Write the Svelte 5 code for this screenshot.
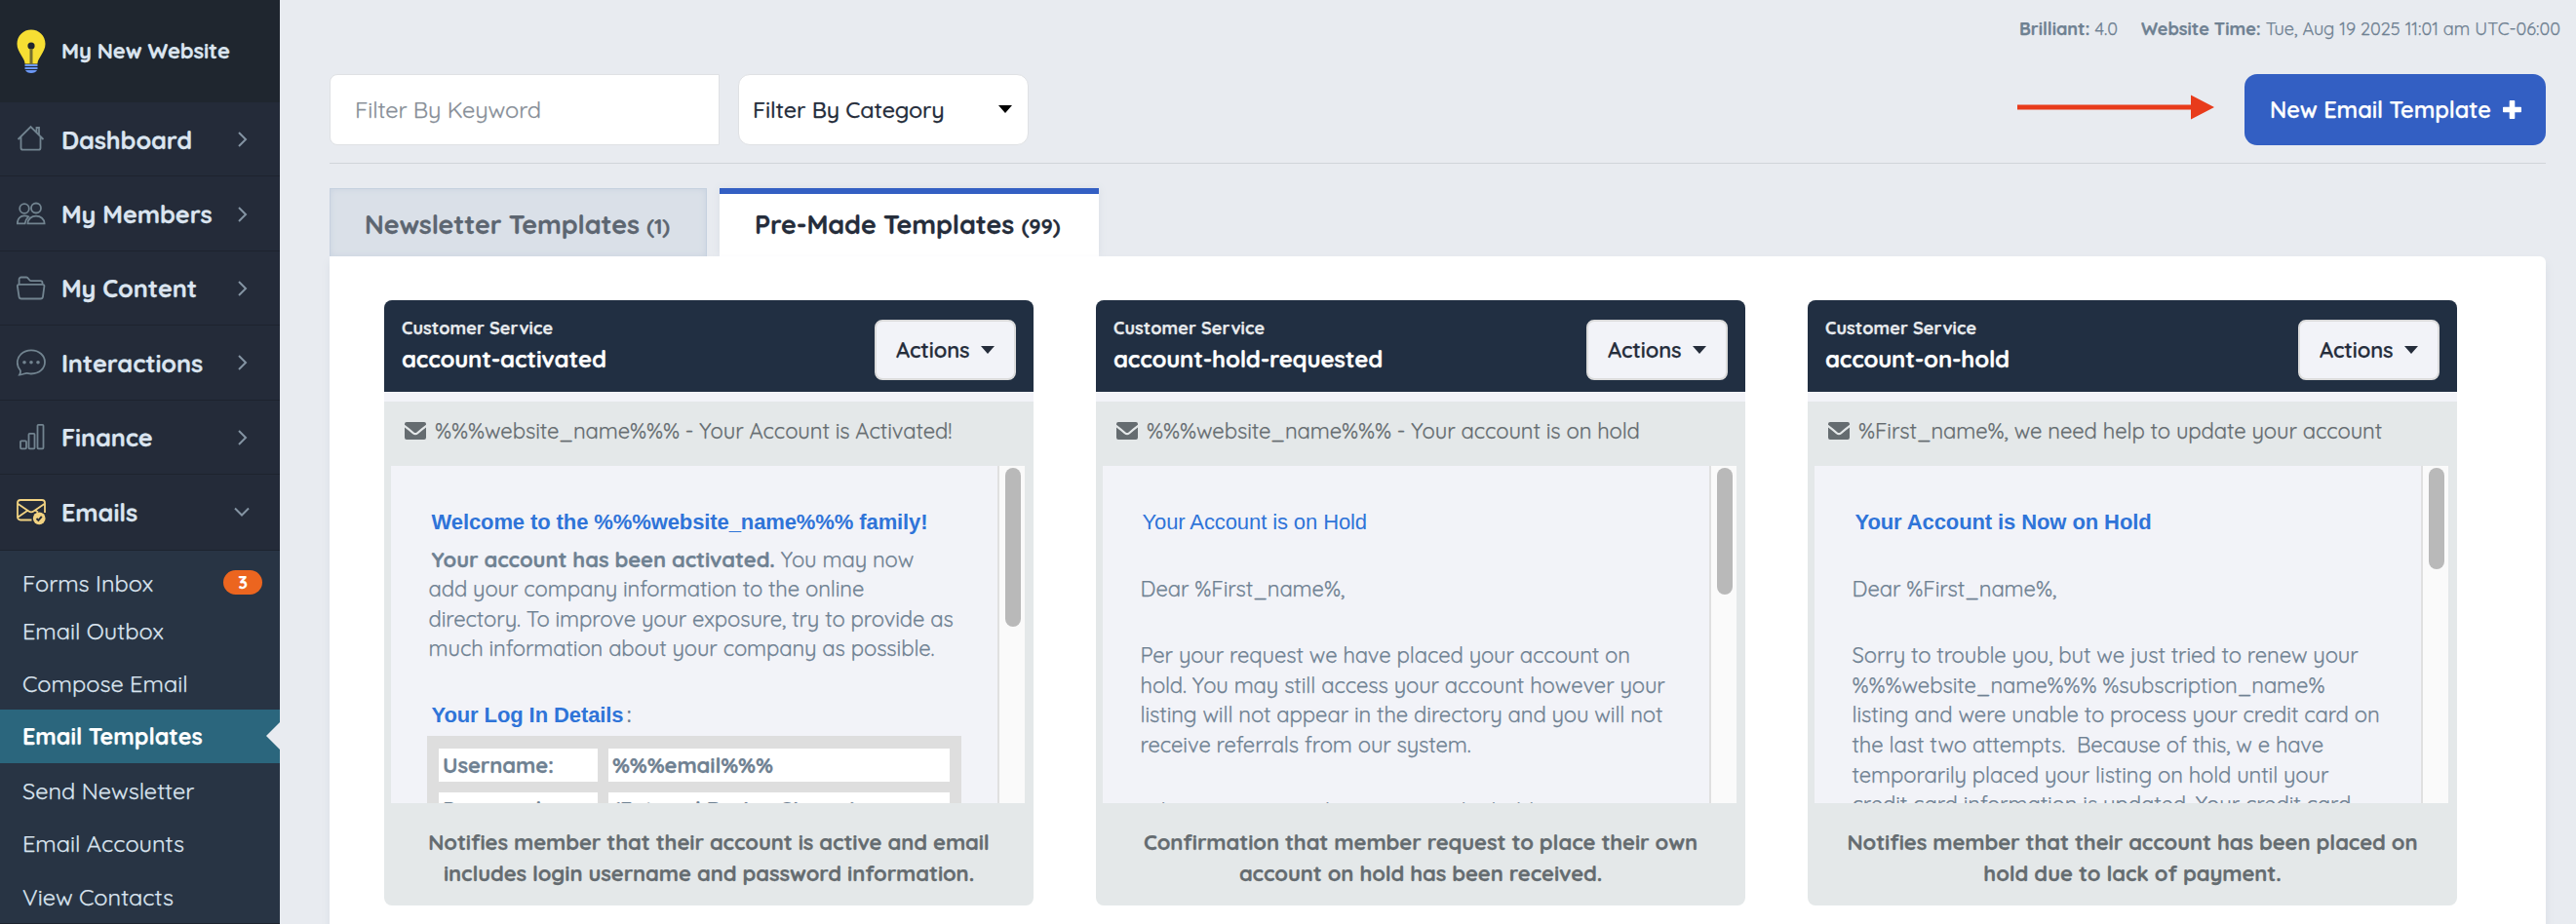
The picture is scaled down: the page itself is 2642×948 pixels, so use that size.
<script lang="ts">
  type Line = { text: string; bold?: string };

  const menu = [
    { label: "Dashboard", icon: "home" },
    { label: "My Members", icon: "people" },
    { label: "My Content", icon: "folder" },
    { label: "Interactions", icon: "chat" },
    { label: "Finance", icon: "bars" },
    { label: "Emails", icon: "envelope", open: true },
  ];

  const submenu = [
    { label: "Forms Inbox", badge: 3 },
    { label: "Email Outbox" },
    { label: "Compose Email" },
    { label: "Email Templates", active: true },
    { label: "Send Newsletter" },
    { label: "Email Accounts" },
    { label: "View Contacts" },
  ];

  const templates: {
    category: string;
    name: string;
    subject: string;
    heading: string;
    light?: boolean;
    paragraphs: Line[][];
    login?: string[][];
    thumb: number;
    notes: string[];
  }[] = [
    {
      category: "Customer Service",
      name: "account-activated",
      subject: "%%%website_name%%% - Your Account is Activated!",
      heading: "Welcome to the %%%website_name%%% family!",
      paragraphs: [
        [
          { bold: "Your account has been activated.", text: " You may now" },
          { text: "add your company information to the online" },
          { text: "directory. To improve your exposure, try to provide as" },
          { text: "much information about your company as possible." },
        ],
      ],
      login: [
        ["Username:", "%%%email%%%"],
        ["Password:", "(Entered During Signup)"],
      ],
      thumb: 163,
      notes: [
        "Notifies member that their account is active and email",
        "includes login username and password information.",
      ],
    },
    {
      category: "Customer Service",
      name: "account-hold-requested",
      subject: "%%%website_name%%% - Your account is on hold",
      heading: "Your Account is on Hold",
      light: true,
      paragraphs: [
        [{ text: "Dear %First_name%," }],
        [
          { text: "Per your request we have placed your account on" },
          { text: "hold. You may still access your account however your" },
          { text: "listing will not appear in the directory and you will not" },
          { text: "receive referrals from our system." },
        ],
        [{ text: "When you are ready to remove the hold" }],
      ],
      thumb: 130,
      notes: [
        "Confirmation that member request to place their own",
        "account on hold has been received.",
      ],
    },
    {
      category: "Customer Service",
      name: "account-on-hold",
      subject: "%First_name%, we need help to update your account",
      heading: "Your Account is Now on Hold",
      paragraphs: [
        [{ text: "Dear %First_name%," }],
        [
          { text: "Sorry to trouble you, but we just tried to renew your" },
          { text: "%%%website_name%%% %subscription_name%" },
          { text: "listing and were unable to process your credit card on" },
          { text: "the last two attempts.  Because of this, w e have" },
          { text: "temporarily placed your listing on hold until your" },
          { text: "credit card information is updated. Your credit card" },
        ],
      ],
      thumb: 104,
      notes: [
        "Notifies member that their account has been placed on",
        "hold due to lack of payment.",
      ],
    },
  ];
</script>

<div class="app">
  <aside class="sidebar">
    <div class="brand">
      <svg class="bulb" viewBox="0 0 30 45" width="30" height="45">
        <path
          fill="#f7df33"
          d="M15 .5C6.800.5.500 6.800.500 15c0 4.500 2 7.800 4.200 11.500C6.800 30 8.300 32 8.600 35.500h12.800c.3-3.500 1.800-5.500 3.900-9C27.500 22.800 29.500 19.500 29.500 15 29.500 6.800 23.200.5 15 .5z"
        />
        <circle cx="15" cy="17" r="3.600" fill="#1f262f" />
        <path stroke="#1f262f" stroke-width="2.600" d="M15 17v18.500" />
        <path stroke="#f7df33" stroke-width=".8" d="M15 20v15.500" />
        <path fill="#6b97f5" d="M8.500 36h13v2h-13zM8.500 39h13v2h-13zM9 42h12c-1 2-3.200 3-6 3s-5-1-6-3z" />
      </svg>
      <span>My New Website</span>
    </div>

    <nav>
      {#each menu as item}
        <a class="item" class:open={item.open} href="#{item.icon}">
          <svg class="icon {item.icon}" viewBox="0 0 30 30" width="30" height="30">
            {#if item.icon === "home"}
              <path d="M1.500 15 14.500 2l13 13M4.500 12.500v11.200a2 2 0 0 0 2 2h16a2 2 0 0 0 2-2V12.500M20.500 7.500v-4.500H23v7" />
            {:else if item.icon === "people"}
              <circle cx="8" cy="9" r="4.800" />
              <circle cx="20" cy="8.500" r="5" />
              <path d="M12.200 17.300C10.800 16.500 9.500 16.300 8 16.300 3.800 16.300.8 19.500.8 24.300h7.800c.3-2.800 1.400-5 3.600-7z" />
              <path d="M20 16.700c-4.800 0-8.400 3-8.600 7.600h17.200c-.2-4.600-3.800-7.600-8.600-7.600z" />
            {:else if item.icon === "folder"}
              <path d="M2.600 10V5.500a2 2 0 0 1 2-2h5.600c1.800 0 2.600 3.700 4.600 3.700h9.700a2 2 0 0 1 2 2V10" />
              <path d="M2.500 10.800h24.200c1.200 0 1.800.8 1.700 1.800l-1.400 10.700a2.500 2.500 0 0 1-2.500 2.200H5a2.500 2.500 0 0 1-2.500-2.200L.9 12.600c-.1-1 .5-1.800 1.600-1.800z" />
            {:else if item.icon === "chat"}
              <path d="M3 27.500c1-1.500 1.200-2.800.8-4.500C1.800 20.800.8 18.200.8 15 .8 8.200 6.600 2.400 15 2.400S29 8 29 14.500 23.400 26.500 15 26.500c-2.200 0-3.200-.6-4.500-.6-2.200 0-3.700 1.400-7.500 1.600z" />
              <g class="dots"><circle cx="8" cy="14.800" r="1.800" /><circle cx="15" cy="14.800" r="1.800" /><circle cx="22" cy="14.800" r="1.800" /></g>
            {:else if item.icon === "bars"}
              <rect x="4" y="18.300" width="6" height="8" rx="1" />
              <rect x="12.500" y="10.800" width="6" height="15.500" rx="1" />
              <rect x="21.500" y="1.800" width="6" height="24.500" rx="1" />
            {:else}
              <path d="M15.500 23.500H4a3 3 0 0 1-3-3V6a3 3 0 0 1 3-3h22a3 3 0 0 1 3 3v10M1.500 7 12.500 14.500c2 1.400 3 1.400 5 0L28.500 7M1.500 20.500 11 14M22 15.500l-3-2" />
              <circle class="tick" cx="23.200" cy="21.800" r="6.400" />
              <path class="mark" d="m20.500 22 1.900 1.900 3.400-4" />
            {/if}
          </svg>
          <span>{item.label}</span>
          <svg class="chevron" viewBox="0 0 16 16" width="16" height="16">
            <path d={item.open ? "M1 4.500 8 11.500l7-7" : "M5 1l7 7-7 7"} />
          </svg>
        </a>
      {/each}
    </nav>

    <div class="submenu">
      {#each submenu as entry}
        <a class:active={entry.active} class:tight={entry.badge} href="#emails">
          <span>{entry.label}</span>
          {#if entry.badge}<b class="badge">{entry.badge}</b>{/if}
        </a>
      {/each}
    </div>
  </aside>

  <main>
    <div class="status">
      <span class="version"><b>Brilliant:</b> 4.0</span>
      <span><b>Website Time:</b> Tue, Aug 19 2025 11:01 am UTC-06:00</span>
    </div>

    <div class="toolbar">
      <input class="keyword" placeholder="Filter By Keyword" />
      <div class="select">
        <span>Filter By Category</span>
        <i class="caret"></i>
      </div>
      <svg class="arrow" viewBox="0 0 202 26" width="202" height="26">
        <path fill="#e83b1b" d="M0 10.500h178V.5l24 12.500-24 12.500v-10H0z" />
      </svg>
      <button class="create">
        <span>New Email Template</span>
        <svg viewBox="0 0 19 19" width="19" height="19">
          <path fill="#fff" d="M7.500 0h4q.8 0 .8.800v5.900h5.900q.8 0 .8.800v4q0 .8-.8.800h-5.900v5.900q0 .8-.8.800h-4q-.8 0-.8-.8v-5.900H.8q-.8 0-.8-.8v-4q0-.8.800-.8h5.900V.8q0-.8.800-.8z" />
        </svg>
      </button>
    </div>

    <div class="tabs">
      <div class="tab">Newsletter Templates <small>(1)</small></div>
      <div class="tab current">Pre-Made Templates <small>(99)</small></div>
    </div>

    <section class="panel">
      {#each templates as template}
        <article class="card">
          <header>
            <div>
              <p class="category">{template.category}</p>
              <h3>{template.name}</h3>
            </div>
            <button class="actions">Actions <i class="caret"></i></button>
          </header>

          <div class="subject">
            <svg viewBox="0 0 22 18" width="22" height="18">
              <path d="M2 0h18a2 2 0 0 1 2 2v.8c-3.300 2.500-6.500 5-9.500 7.600-1 .9-2 .9-3 0C6.500 7.800 3.300 5.300 0 2.800V2a2 2 0 0 1 2-2z" />
              <path d="M0 5.500c2.800 2.200 5.500 4.300 8 6.500 2 1.800 4 1.800 6 0 2.500-2.200 5.200-4.300 8-6.500V16a2 2 0 0 1-2 2H2a2 2 0 0 1-2-2z" />
            </svg>
            <span>{template.subject}</span>
          </div>

          <div class="preview">
            <div class="mail" class:welcome={template.login}>
              <h4 class:light={template.light}>{template.heading}</h4>
              {#each template.paragraphs as lines}
                <p>
                  {#each lines as line}
                    <span class="line">{#if line.bold}<b>{line.bold}</b>{/if}{line.text}</span>
                  {/each}
                </p>
              {/each}
              {#if template.login}
                <h4 class="details">Your Log In Details<i>:</i></h4>
                <div class="login">
                  {#each template.login as row}
                    {#each row as cell}<b>{cell}</b>{/each}
                  {/each}
                </div>
              {/if}
            </div>
            <div class="track"><div class="thumb" style="height: {template.thumb}px"></div></div>
          </div>

          <footer>
            {#each template.notes as note}<span>{note}</span>{/each}
          </footer>
        </article>
      {/each}
    </section>
  </main>
</div>

<style>
  :global(body) {
    overflow: hidden;
    background: #e8ebf0;
  }

  .app {
    display: flex;
    height: 948px;
    overflow: hidden;
    font-family: Quicksand, Lato, sans-serif;
    font-size: 22px;
    letter-spacing: -0.1px;
    -webkit-text-stroke: 0.25px currentColor;
    color: #252d3b;
  }

  .app * {
    box-sizing: border-box;
  }

  p,
  h3,
  h4 {
    margin: 0;
  }

  a {
    color: inherit;
    text-decoration: none;
  }

  button,
  input {
    font: inherit;
    letter-spacing: inherit;
  }

  .caret {
    border: 7px solid transparent;
    border-top: 8px solid currentColor;
    border-bottom: 0;
  }

  .sidebar {
    width: 287px;
    flex: none;
    background: #242b39;
    color: #dbe5f0;
  }

  .brand {
    display: flex;
    align-items: center;
    gap: 16px;
    height: 105px;
    padding: 0 0 1px 17px;
    background: #1f262f;
    font-weight: 700;
  }

  .item {
    display: flex;
    align-items: center;
    height: 76.400px;
    padding: 1px 31px 0 17px;
    border-bottom: 1px solid #1d232e;
    font-size: 25.300px;
    font-weight: 700;
  }

  .item.open {
    height: 78px;
    padding-top: 0;
  }

  .item span {
    flex: 1;
    margin-left: 16px;
  }

  .icon {
    fill: none;
    stroke: #728490;
    stroke-width: 1.800;
  }

  .dots {
    fill: #728490;
    stroke: none;
  }

  .icon.envelope {
    stroke: #f2d382;
  }

  .icon .tick {
    fill: #f2d382;
    stroke: none;
  }

  .icon .mark {
    stroke: #242b39;
    stroke-width: 2;
  }

  .chevron {
    fill: none;
    stroke: #8494a3;
    stroke-width: 2;
  }

  .submenu {
    background: #283444;
    border-bottom: 1px solid #1d232e;
    padding-top: 8px;
  }

  .submenu a {
    display: flex;
    position: relative;
    align-items: center;
    justify-content: space-between;
    height: 54.600px;
    padding: 1px 18px 0 23px;
    font-size: 23.500px;
    letter-spacing: 0;
  }

  .submenu .tight {
    height: 46px;
    padding-top: 5px;
  }

  .submenu .active {
    background: #2b667d;
    color: #fff;
    font-size: 23.300px;
    font-weight: 700;
  }

  .submenu .active::after {
    content: "";
    position: absolute;
    top: 13px;
    right: 0;
    border: 14px solid transparent;
    border-right-color: #e8ebf0;
    border-left: 0;
  }

  .badge {
    width: 40px;
    margin-top: -2px;
    border-radius: 13px;
    background: #ec651f;
    color: #fff;
    font-size: 18px;
    line-height: 25px;
    text-align: center;
  }

  main {
    flex: 1;
    padding: 0 31px 0 51px;
  }

  .status {
    display: flex;
    justify-content: flex-end;
    gap: 24px;
    height: 76px;
    margin-right: -15px;
    padding-top: 18px;
    color: #6f8192;
    font-size: 18.100px;
    letter-spacing: 0;
  }

  .toolbar {
    display: flex;
    align-items: center;
    height: 92px;
    padding-bottom: 18px;
    border-bottom: 1px solid #d0d5da;
    font-size: 23.600px;
  }

  .keyword {
    width: 400px;
    height: 73px;
    padding: 0 25px 1px;
    border: 1px solid #dfe1e4;
    border-radius: 8px 0 0 8px;
    background: #fff;
  }

  .keyword::placeholder {
    color: #878e97;
  }

  .select {
    display: flex;
    align-items: center;
    justify-content: space-between;
    width: 298px;
    height: 73px;
    margin-left: 19px;
    padding: 0 16px 1px 14px;
    border: 1px solid #dfe1e4;
    border-radius: 12px;
    background: #fff;
    font-size: 23.300px;
    font-weight: 500;
  }

  .select .caret {
    color: #000;
  }

  .arrow {
    margin: -5px 31px 0 auto;
  }

  .create {
    display: flex;
    align-items: center;
    justify-content: space-between;
    width: 309px;
    height: 73px;
    padding: 0 25px 1px 26px;
    border: 0;
    border-radius: 13px;
    background: #335fc3;
    color: #fff;
    font-weight: 600;
    white-space: nowrap;
  }

  .tabs {
    display: flex;
    gap: 13px;
    padding-top: 25px;
  }

  .tab {
    width: 387px;
    height: 70px;
    padding: 0 35px;
    border: 1px solid #c6d1df;
    border-bottom: 0;
    background: #dae0e8;
    box-shadow: inset 0 0 6px #c8d2df;
    color: #5d6671;
    font-size: 26.900px;
    font-weight: 700;
    line-height: 73px;
    white-space: nowrap;
  }

  .tab.current {
    width: 389px;
    padding-left: 36px;
    border: 0;
    border-top: 6px solid #335fc3;
    background: #fff;
    box-shadow: 0 0 8px #d9dee5;
    color: #252d3b;
    line-height: 62px;
  }

  .tab small {
    font-size: 21.700px;
  }

  .panel {
    position: relative;
    display: flex;
    gap: 64px;
    height: 700px;
    padding: 45px 56px;
    border-radius: 0 6px 0 0;
    background: #fff;
    box-shadow: 0 6px 8px #d9dee5;
  }

  .card {
    width: 666px;
    height: 621px;
    flex: none;
    overflow: hidden;
    border-radius: 8px;
    background: #e4e8e9;
  }

  header {
    display: flex;
    align-items: center;
    justify-content: space-between;
    height: 104px;
    padding: 0 18px 0 18px;
    border-bottom: 10px solid #f2f3f8;
    background: #212f42;
    color: #fff;
  }

  .category {
    color: #e8ebee;
    font-size: 18px;
    font-weight: 700;
    letter-spacing: 0.1px;
    line-height: 28px;
  }

  h3 {
    margin-bottom: 2px;
    font-size: 24px;
    letter-spacing: -0.2px;
    line-height: 34px;
  }

  .actions {
    display: flex;
    align-items: center;
    justify-content: space-between;
    width: 145px;
    height: 62px;
    margin-top: 7px;
    padding: 0 20px;
    border: 2px solid #dcdcdc;
    border-radius: 8px;
    background: #f2f3f8;
    color: #252d3b;
    font-weight: 600;
  }

  .subject {
    display: flex;
    align-items: center;
    gap: 9px;
    height: 66px;
    padding: 0 0 7px 21px;
    color: #656c70;
    white-space: nowrap;
  }

  .subject svg {
    fill: #656c70;
  }

  .preview {
    display: flex;
    width: 650px;
    height: 346px;
    margin-left: 7px;
    overflow: hidden;
    background: #f2f3f8;
  }

  .mail {
    flex: 1;
    min-width: 0;
    padding: 43px 0 0 38.500px;
    color: #6f8192;
    line-height: 30.600px;
  }

  .mail p {
    display: flex;
    flex-direction: column;
    margin-top: 37.500px;
  }

  .mail.welcome p {
    margin-top: 7px;
  }

  .line {
    white-space: pre;
  }

  .welcome .line:first-child {
    margin-left: 3px;
  }

  h4 {
    margin-left: 3px;
    color: #2f74d8;
    font: 700 22px/30.6px "Liberation Sans", Arial, sans-serif;
    -webkit-text-stroke: 0;
  }

  h4.light {
    margin-left: 2px;
    font-weight: 400;
  }

  .details {
    margin-top: 38px;
  }

  .details i {
    margin-left: 3px;
    color: #6f8192;
    font: 600 22px Quicksand, Lato, sans-serif;
  }

  .login {
    display: grid;
    grid-template-columns: 163px 350px;
    gap: 11px;
    width: 548px;
    margin: 5px 0 0 -1.500px;
    padding: 13px 12px;
    background: #dedede;
  }

  .login b {
    height: 34px;
    padding-left: 4px;
    background: #fff;
    line-height: 34px;
  }

  .track {
    width: 28px;
    flex: none;
    padding: 2px 4px 0 6px;
    border-left: 2px solid #e0e0e0;
    background: #fafafa;
  }

  .thumb {
    width: 16px;
    border-radius: 8px;
    background: #b9b9b9;
  }

  footer {
    display: flex;
    flex-direction: column;
    align-items: center;
    padding-top: 24px;
    color: #656c70;
    font-weight: 700;
    line-height: 32px;
    white-space: nowrap;
  }
</style>
